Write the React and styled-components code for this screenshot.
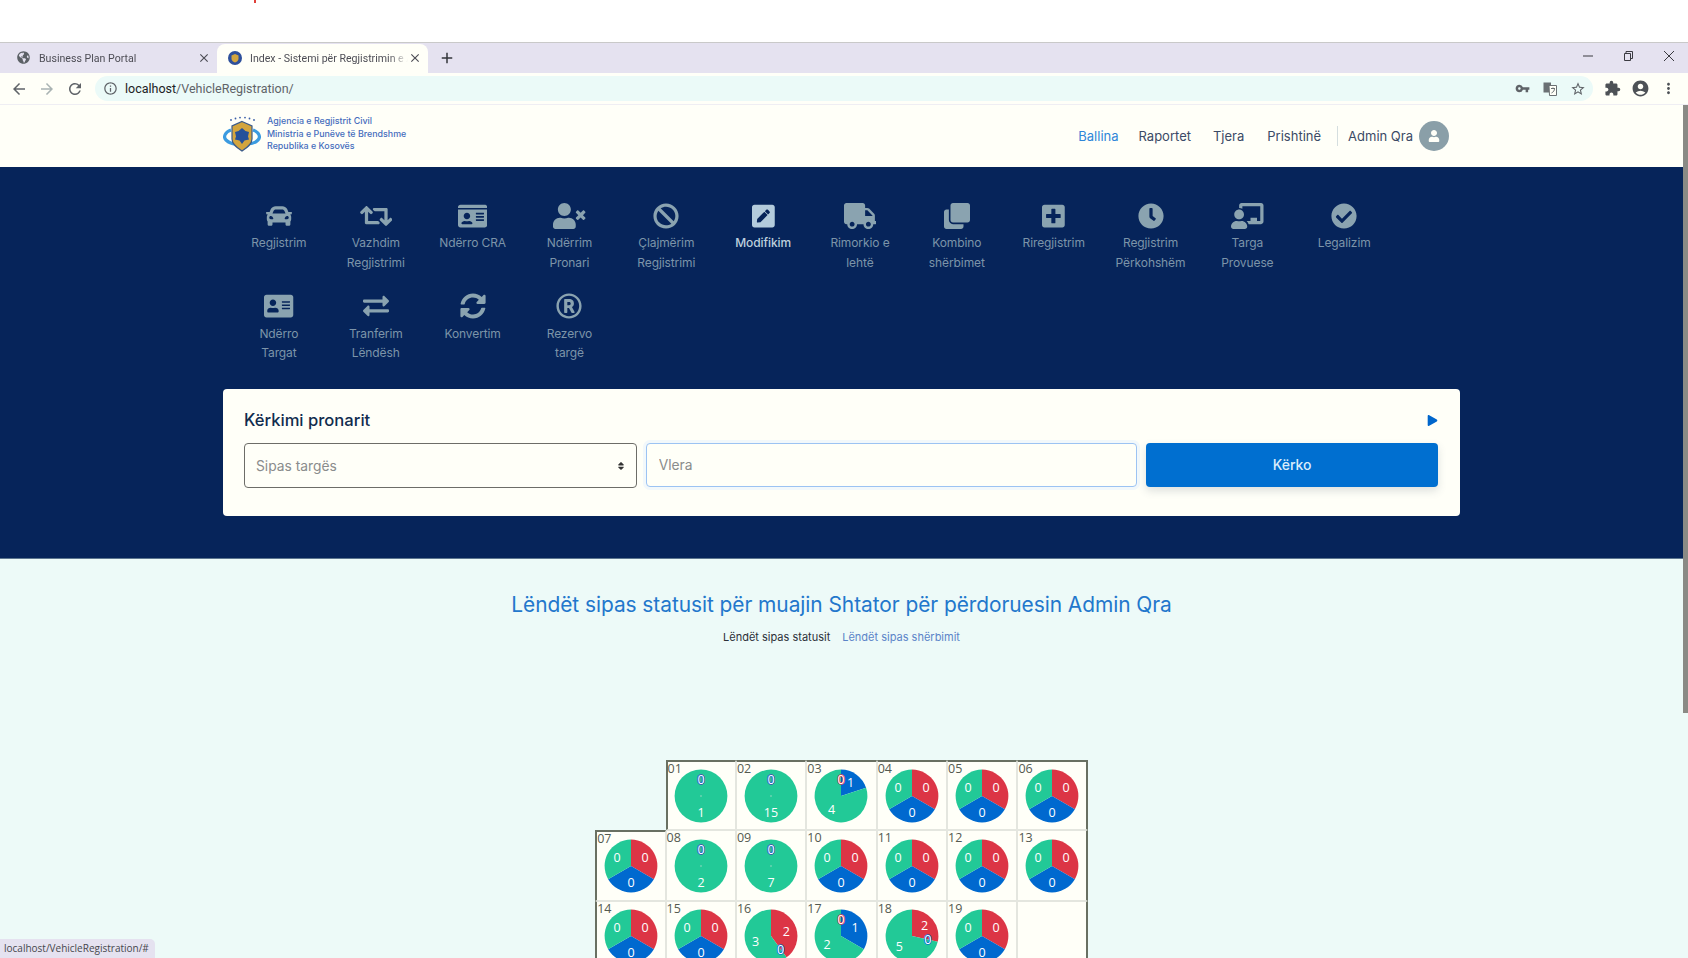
import React from "react";
import styled, { createGlobalStyle } from "styled-components";
import {
  FaCar,
  FaRetweet,
  FaIdCard,
  FaUserTimes,
  FaBan,
  FaPenSquare,
  FaTruck,
  FaClone,
  FaPlusSquare,
  FaClock,
  FaChalkboardTeacher,
  FaCheckCircle,
  FaAddressCard,
  FaExchangeAlt,
  FaSyncAlt,
  FaRegRegistered,
  FaUser,
  FaSort,
  FaGlobeAmericas,
  FaPlay,
} from "react-icons/fa";
import {
  MdArrowBack,
  MdArrowForward,
  MdRefresh,
  MdInfoOutline,
  MdVpnKey,
  MdStarBorder,
  MdExtension,
  MdAccountCircle,
  MdMoreVert,
  MdClose,
  MdAdd,
} from "react-icons/md";

const SANS = `"Inter", "Noto Sans", sans-serif`;
const UI = `"Open Sans", "Noto Sans", sans-serif`;
const CHROME = `"Roboto", "Noto Sans", sans-serif`;

const GlobalStyle = createGlobalStyle`
  html, body {
    margin: 0;
    height: 958px;
    overflow: hidden;
    background: #edfaf8;
    font-family: ${SANS};
  }
  * {
    box-sizing: border-box;
  }
`;

const Page = styled.div`
  position: relative;
  width: 1688px;
  height: 958px;
  overflow: hidden;
`;

const TopBlank = styled.div`
  height: 43px;
  background: #fff;
  border-bottom: 1px solid #c9c9c9;
  position: relative;
`;

const RedDot = styled.i`
  position: absolute;
  left: 254px;
  top: 0;
  width: 2px;
  height: 3px;
  background: #e0403a;
`;

const TabStrip = styled.div`
  height: 30px;
  background: #e5e2f0;
  display: flex;
  align-items: flex-end;
  color: #4d4d55;
  font-family: ${CHROME};
  font-size: 10.6px;
`;

const Tab = styled.div`
  width: ${(p) => p.$width}px;
  height: 29px;
  display: flex;
  align-items: center;
  padding: 0 6px 1px ${(p) => p.$pad}px;
  border-radius: 8px 8px 0 0;
  background: ${(p) => (p.$active ? "#fffff8" : "transparent")};
`;

const TabTitle = styled.span`
  flex: 1;
  margin-left: 8px;
  white-space: nowrap;
  overflow: hidden;
  -webkit-mask-image: linear-gradient(to right, #000 88%, transparent);
  mask-image: linear-gradient(to right, #000 88%, transparent);
`;

const TabFavicon = styled.span`
  width: 14px;
  height: 14px;
  display: flex;
  color: #5c6166;
`;

const NewTab = styled.div`
  display: flex;
  align-items: center;
  height: 29px;
  margin-left: 10px;
  padding-bottom: 1px;
  color: #33363a;
`;

const WindowButtons = styled.div`
  margin-left: auto;
  align-self: flex-start;
  display: flex;
  align-items: center;
  height: 25px;
  padding-right: 13px;
  color: #3a3a40;
  gap: 30px;
`;

const Toolbar = styled.div`
  height: 31px;
  background: #fffff8;
  display: flex;
  align-items: center;
  color: #5f6368;
`;

const NavIcons = styled.div`
  width: 95px;
  padding-left: 10px;
  display: flex;
  gap: 10px;
  align-items: center;
`;

const Omnibox = styled.div`
  width: 1498px;
  height: 25px;
  border-radius: 13px;
  background: #ebfaf8;
  display: flex;
  align-items: center;
  padding: 0 7px 0 8px;
  font-family: ${CHROME};
  font-size: 12.5px;
  color: #5f6368;
`;

const Url = styled.span`
  margin-left: 7px;
  b {
    font-weight: 400;
    color: #202124;
  }
`;

const OmniIcons = styled.div`
  margin-left: auto;
  display: flex;
  gap: 13px;
  align-items: center;
`;

const ToolIcons = styled.div`
  display: flex;
  align-items: center;
  gap: 10px;
  padding-left: 11px;
  color: #4d5156;
`;

const Separator = styled.div`
  height: 1px;
  background: #efeef3;
`;

const Navbar = styled.nav`
  height: 62px;
  width: 1688px;
  background: #fffff8;
  display: flex;
  justify-content: center;
  padding-right: 5px;
`;

const Container = styled.div`
  width: 1237px;
  display: flex;
`;

const Brand = styled.div`
  display: flex;
  align-items: center;
  gap: 6px;
  margin-top: -4px;
`;

const BrandText = styled.div`
  font-size: 8.9px;
  line-height: 12.5px;
  font-weight: 500;
  color: #456dbd;
`;

const NavLinks = styled.div`
  margin-left: auto;
  display: flex;
  align-items: center;
  padding-right: 11px;
  font-size: 13px;
  color: #3b4a66;
`;

const NavLink = styled.a`
  margin-left: ${(p) => p.$gap}px;
  color: ${(p) => (p.$active ? "#2f86d8" : "inherit")};
`;

const NavDivider = styled.span`
  width: 1px;
  height: 20px;
  background: #d5dedf;
  margin: 0 10px 0 16px;
`;

const Avatar = styled.span`
  width: 30px;
  height: 30px;
  margin-left: 6px;
  border-radius: 50%;
  background: #8a9fa8;
  color: #fffff8;
  display: flex;
  align-items: center;
  justify-content: center;
`;

const Hero = styled.section`
  height: 392px;
  background: #06245a;
  padding: 33px 5px 0 0;
  display: flex;
  flex-direction: column;
  align-items: center;
  border-bottom: 1px solid #5c7690;
`;

const Menu = styled.div`
  width: 1237px;
  padding-left: 7.5px;
  display: flex;
  flex-wrap: wrap;
`;

const MenuItem = styled.a`
  width: 96.85px;
  height: 90.5px;
  display: flex;
  flex-direction: column;
  align-items: center;
  text-align: center;
  color: ${(p) => (p.$active ? "#b3cbdc" : "#8aa3b0")};
`;

const MenuIcon = styled.span`
  height: 30px;
  padding-top: 1px;
  display: flex;
  align-items: center;
  svg {
    height: 26px;
    width: ${(p) => 26 * p.$ratio}px;
  }
`;

const MenuLabel = styled.span`
  margin-top: 3px;
  font-size: 12px;
  line-height: 19.5px;
  white-space: pre-line;
  letter-spacing: -0.1px;
  font-weight: ${(p) => (p.$active ? 500 : 400)};
  color: ${(p) => (p.$active ? "#bdd0de" : "#7c94a9")};
`;

const SearchCard = styled.div`
  width: 1237px;
  height: 127px;
  margin-top: 8px;
  padding: 19px 22px 0 21px;
  background: #fffff8;
  border-radius: 4px;
`;

const CardHead = styled.div`
  height: 24px;
  display: flex;
  align-items: center;
  justify-content: space-between;
  color: #0066cc;
`;

const CardTitle = styled.h2`
  margin: 0;
  font-size: 16.6px;
  font-weight: 500;
  color: #112c4e;
`;

const SearchRow = styled.div`
  display: flex;
  gap: 9px;
  margin-top: 11px;
`;

const SelectBox = styled.div`
  width: 393px;
  height: 45px;
  padding: 0 10px 0 11px;
  border: 1px solid #6d6d68;
  border-radius: 4px;
  display: flex;
  align-items: center;
  justify-content: space-between;
  font-size: 13.8px;
  color: #8a8c8c;
  svg {
    color: #333;
  }
`;

const ValueInput = styled.input`
  width: 492px;
  height: 44px;
  padding: 0 12px;
  border: 1px solid #9cc3f3;
  border-radius: 4px;
  background: #fffff8;
  box-shadow: 0 0 0 3px #f2f8fb;
  font-family: ${SANS};
  font-size: 13.8px;
  outline: none;
  &::placeholder {
    color: #8a8c8c;
  }
`;

const SearchButton = styled.button`
  width: 292px;
  height: 44px;
  padding: 0 0 2px;
  border: 0;
  border-radius: 4px;
  background: #006fd0;
  color: #d9ecfb;
  font-family: ${SANS};
  font-size: 14px;
  font-weight: 500;
  box-shadow: 0 4px 8px rgba(70, 90, 110, 0.18);
`;

const Stats = styled.section`
  padding-right: 5px;
  display: flex;
  flex-direction: column;
  align-items: center;
`;

const StatsTitle = styled.h1`
  margin: 32px 0 0;
  font-size: 20.9px;
  line-height: 28px;
  font-weight: 400;
  color: #2277cc;
  letter-spacing: -0.05px;
`;

const StatsTabs = styled.div`
  margin-top: 9px;
  display: flex;
  gap: 12px;
  font-size: 11px;
  line-height: 18px;
`;

const StatsTab = styled.a`
  color: ${(p) => (p.$active ? "#2c3038" : "#5b84c8")};
`;

const Municipalities = styled.div`
  margin-top: 114px;
  display: grid;
  grid-template-columns: repeat(7, 70.4px);
  grid-auto-rows: 70.4px;
`;

const Cell = styled.div`
  position: relative;
  display: flex;
  align-items: center;
  justify-content: center;
  background: ${(p) => (p.$hole ? "transparent" : "#fffff8")};
  border: 1px solid ${(p) => (p.$hole ? "transparent" : "#e4e6df")};
  border-top: ${(p) => (p.$top ? "2px solid #697062" : "")};
  border-left: ${(p) => (p.$left ? "2px solid #697062" : "")};
  border-right: ${(p) => (p.$right ? "2px solid #697062" : "")};
`;

const CellNumber = styled.span`
  position: absolute;
  left: 0;
  top: -1px;
  font-family: ${UI};
  font-size: 12.5px;
  line-height: 15px;
  color: #555a50;
`;

const PieLabel = styled.text`
  font-family: ${UI};
  font-size: 12.5px;
  font-weight: 500;
  fill: #fff;
  stroke: ${(p) => p.$halo};
  stroke-width: 1.5px;
  paint-order: stroke;
  text-anchor: middle;
  dominant-baseline: central;
`;

const Scrollbar = styled.div`
  position: absolute;
  right: 0;
  top: 105px;
  width: 5px;
  height: 608px;
  background: #8a8a85;
`;

const StatusBubble = styled.div`
  position: absolute;
  left: 0;
  bottom: 0;
  height: 19px;
  padding: 0 6px 0 4px;
  border-radius: 0 5px 0 0;
  background: #e5e2f0;
  font-family: ${UI};
  font-size: 10px;
  line-height: 19px;
  color: #45474d;
`;

const RED = "#dc3545";
const BLUE = "#0069cf";
const GREEN = "#22c997";

const menu = [
  { icon: FaCar, ratio: 1, label: "Regjistrim" },
  { icon: FaRetweet, ratio: 1.25, label: "Vazhdim\nRegjistrimi" },
  { icon: FaIdCard, ratio: 1.125, label: "Ndërro CRA" },
  { icon: FaUserTimes, ratio: 1.25, label: "Ndërrim\nPronari" },
  { icon: FaBan, ratio: 1, label: "Çlajmërim\nRegjistrimi" },
  { icon: FaPenSquare, ratio: 0.875, label: "Modifikim", active: true },
  { icon: FaTruck, ratio: 1.25, label: "Rimorkio e\nlehtë" },
  { icon: FaClone, ratio: 1, label: "Kombino\nshërbimet" },
  { icon: FaPlusSquare, ratio: 0.875, label: "Riregjistrim" },
  { icon: FaClock, ratio: 1, label: "Regjistrim\nPërkohshëm" },
  { icon: FaChalkboardTeacher, ratio: 1.25, label: "Targa\nProvuese" },
  { icon: FaCheckCircle, ratio: 1, label: "Legalizim" },
  { icon: FaAddressCard, ratio: 1.125, label: "Ndërro\nTargat" },
  { icon: FaExchangeAlt, ratio: 1, label: "Tranferim\nLëndësh" },
  { icon: FaSyncAlt, ratio: 1, label: "Konvertim" },
  { icon: FaRegRegistered, ratio: 1, label: "Rezervo\ntargë" },
];

// v is [red, blue, green]
const cells = [
  { hole: true },
  { n: "01", v: [0, 0, 1] },
  { n: "02", v: [0, 0, 15] },
  { n: "03", v: [0, 1, 4] },
  { n: "04", v: [0, 0, 0] },
  { n: "05", v: [0, 0, 0] },
  { n: "06", v: [0, 0, 0] },
  { n: "07", v: [0, 0, 0] },
  { n: "08", v: [0, 0, 2] },
  { n: "09", v: [0, 0, 7] },
  { n: "10", v: [0, 0, 0] },
  { n: "11", v: [0, 0, 0] },
  { n: "12", v: [0, 0, 0] },
  { n: "13", v: [0, 0, 0] },
  { n: "14", v: [0, 0, 0] },
  { n: "15", v: [0, 0, 0] },
  { n: "16", v: [2, 0, 3] },
  { n: "17", v: [0, 1, 2] },
  { n: "18", v: [2, 0, 5] },
  { n: "19", v: [0, 0, 0] },
  {},
];

const point = (deg, r) => {
  const a = ((deg - 90) * Math.PI) / 180;
  return [r * Math.cos(a), r * Math.sin(a)];
};

const Pie = ({ values }) => {
  const R = 26.4;
  const colors = [RED, BLUE, GREEN];
  const total = values.reduce((s, v) => s + v, 0);
  const parts = total === 0 ? [1, 1, 1] : values;
  const sum = parts.reduce((s, v) => s + v, 0);
  let start = 0;
  const slices = parts.map((v, i) => {
    const sweep = (v / sum) * 360;
    const s = { i, start, end: start + sweep, sweep, value: values[i] };
    start += sweep;
    return s;
  });
  return (
    <svg width="56" height="56" viewBox="-28 -28 56 56">
      {slices.map((s) => {
        if (s.sweep === 0) return null;
        if (s.sweep === 360)
          return <circle key={s.i} r={R} fill={colors[s.i]} />;
        const [x1, y1] = point(s.start, R);
        const [x2, y2] = point(s.end, R);
        return (
          <path
            key={s.i}
            fill={colors[s.i]}
            d={`M0 0L${x1} ${y1}A${R} ${R} 0 ${s.sweep > 180 ? 1 : 0} 1 ${x2} ${y2}Z`}
          />
        );
      })}
      {total > 0 && values[0] + values[1] === 0 && (
        <circle r="0.8" fill="#9bd8c4" />
      )}
      {[0, 2, 1].map((i) => {
        const s = slices[i];
        const [x, y] = point((s.start + s.end) / 2, 16.2);
        return (
          <PieLabel key={i} x={x} y={y} $halo={colors[i]}>
            {s.value}
          </PieLabel>
        );
      })}
    </svg>
  );
};

const Logo = () => (
  <svg width="38" height="38" viewBox="0 0 38 38">
    <g fill="#3a5ea8">
      <circle cx="8" cy="5" r="0.9" />
      <circle cx="12.5" cy="3.5" r="0.9" />
      <circle cx="17" cy="2.6" r="0.9" />
      <circle cx="22" cy="2.6" r="0.9" />
      <circle cx="26.5" cy="3.5" r="0.9" />
      <circle cx="31" cy="5" r="0.9" />
    </g>
    <path
      d="M8 15C2 17 0 22 3 25c3 3 7 4 11 4M30 15c6 2 8 7 5 10-3 3-7 4-11 4"
      fill="none"
      stroke="#3b9be0"
      strokeWidth="3.2"
    />
    <path
      d="M19 6.5l10 4.500v13c0 5.500-5.500 9-10 12-4.500-3-10-6.500-10-12V11z"
      fill="#d3a53e"
      stroke="#3a5a8a"
      strokeWidth="1.2"
    />
    <path
      d="M19 13l3.500 3 3.500 1-1 4.500 1 3-4.500 1L19 29l-2.500-3.500-4.500-1 1-3-1-4.500 3.500-1z"
      fill="#24509a"
    />
  </svg>
);

const RestoreIcon = () => (
  <svg width="10" height="10" viewBox="0 0 10 10" fill="none" stroke="#3a3a40">
    <path d="M1.5 2.5h6v7h-6zM3 2.5V.5h6.500v7h-2" />
  </svg>
);

const TranslateIcon = () => (
  <svg width="14" height="14" viewBox="0 0 14 14">
    <rect x="0.5" y="0.5" width="7.5" height="10" fill="#6b7074" />
    <path d="M6 3.5h7.500v10H6.500z" fill="#fffff8" stroke="#6b7074" />
    <path d="M8 6.5h4M10 5.500v1M8.500 11c2-1 3-2.500 3-4.500" stroke="#6b7074" fill="none" />
  </svg>
);

const KosovoFavicon = () => (
  <svg width="14" height="14" viewBox="0 0 14 14">
    <circle cx="7" cy="7" r="7" fill="#2d4f9b" />
    <path d="M7 3l3.500 1.500V8c0 1.500-2 3-3.500 3.500C5.500 11 3.500 9.500 3.500 8V4.500z" fill="#d3a53e" />
  </svg>
);

export default function App() {
  return (
    <Page>
      <GlobalStyle />
      <TopBlank>
        <RedDot />
      </TopBlank>
      <TabStrip>
        <Tab $width={217} $pad={17}>
          <TabFavicon>
            <FaGlobeAmericas size={13} />
          </TabFavicon>
          <TabTitle>Business Plan Portal</TabTitle>
          <MdClose size={14} />
        </Tab>
        <Tab $width={211} $pad={11} $active>
          <TabFavicon>
            <KosovoFavicon />
          </TabFavicon>
          <TabTitle>Index - Sistemi për Regjistrimin e Automjeteve</TabTitle>
          <MdClose size={14} />
        </Tab>
        <NewTab>
          <MdAdd size={18} />
        </NewTab>
        <WindowButtons>
          <svg width="10" height="10" viewBox="0 0 10 10">
            <path d="M0 5h10" stroke="#3a3a40" />
          </svg>
          <RestoreIcon />
          <svg width="12" height="12" viewBox="0 0 12 12">
            <path d="M1 1l10 10M11 1L1 11" stroke="#3a3a40" />
          </svg>
        </WindowButtons>
      </TabStrip>
      <Toolbar>
        <NavIcons>
          <MdArrowBack size={18} />
          <MdArrowForward size={18} color="#a9b3b3" />
          <MdRefresh size={18} />
        </NavIcons>
        <Omnibox>
          <MdInfoOutline size={15} />
          <Url>
            <b>localhost</b>/VehicleRegistration/
          </Url>
          <OmniIcons>
            <MdVpnKey size={15} />
            <TranslateIcon />
            <MdStarBorder size={16} />
          </OmniIcons>
        </Omnibox>
        <ToolIcons>
          <MdExtension size={17} />
          <MdAccountCircle size={19} />
          <MdMoreVert size={17} />
        </ToolIcons>
      </Toolbar>
      <Separator />
      <Navbar>
        <Container>
          <Brand>
            <Logo />
            <BrandText>
              Agjencia e Regjistrit Civil
              <br />
              Ministria e Punëve të Brendshme
              <br />
              Republika e Kosovës
            </BrandText>
          </Brand>
          <NavLinks>
            <NavLink $active>Ballina</NavLink>
            <NavLink $gap={20}>Raportet</NavLink>
            <NavLink $gap={22}>Tjera</NavLink>
            <NavLink $gap={23}>Prishtinë</NavLink>
            <NavDivider />
            <span>Admin Qra</span>
            <Avatar>
              <FaUser size={12} />
            </Avatar>
          </NavLinks>
        </Container>
      </Navbar>
      <Hero>
        <Menu>
          {menu.map(({ icon: Icon, ratio, label, active }) => (
            <MenuItem key={label} $active={active}>
              <MenuIcon $ratio={ratio}>
                <Icon />
              </MenuIcon>
              <MenuLabel $active={active}>{label}</MenuLabel>
            </MenuItem>
          ))}
        </Menu>
        <SearchCard>
          <CardHead>
            <CardTitle>Kërkimi pronarit</CardTitle>
            <FaPlay size={11} />
          </CardHead>
          <SearchRow>
            <SelectBox>
              Sipas targës
              <FaSort size={10} />
            </SelectBox>
            <ValueInput placeholder="Vlera" />
            <SearchButton>Kërko</SearchButton>
          </SearchRow>
        </SearchCard>
      </Hero>
      <Stats>
        <StatsTitle>
          Lëndët sipas statusit për muajin Shtator për përdoruesin Admin Qra
        </StatsTitle>
        <StatsTabs>
          <StatsTab $active>Lëndët sipas statusit</StatsTab>
          <StatsTab>Lëndët sipas shërbimit</StatsTab>
        </StatsTabs>
        <Municipalities>
          {cells.map((c, i) => (
            <Cell
              key={i}
              $hole={c.hole}
              $top={(i > 0 && i < 7) || i === 7}
              $left={i === 1 || i === 7 || i === 14}
              $right={i % 7 === 6}
            >
              {c.n && <CellNumber>{c.n}</CellNumber>}
              {c.v && <Pie values={c.v} />}
            </Cell>
          ))}
        </Municipalities>
      </Stats>
      <Scrollbar />
      <StatusBubble>localhost/VehicleRegistration/#</StatusBubble>
    </Page>
  );
}
